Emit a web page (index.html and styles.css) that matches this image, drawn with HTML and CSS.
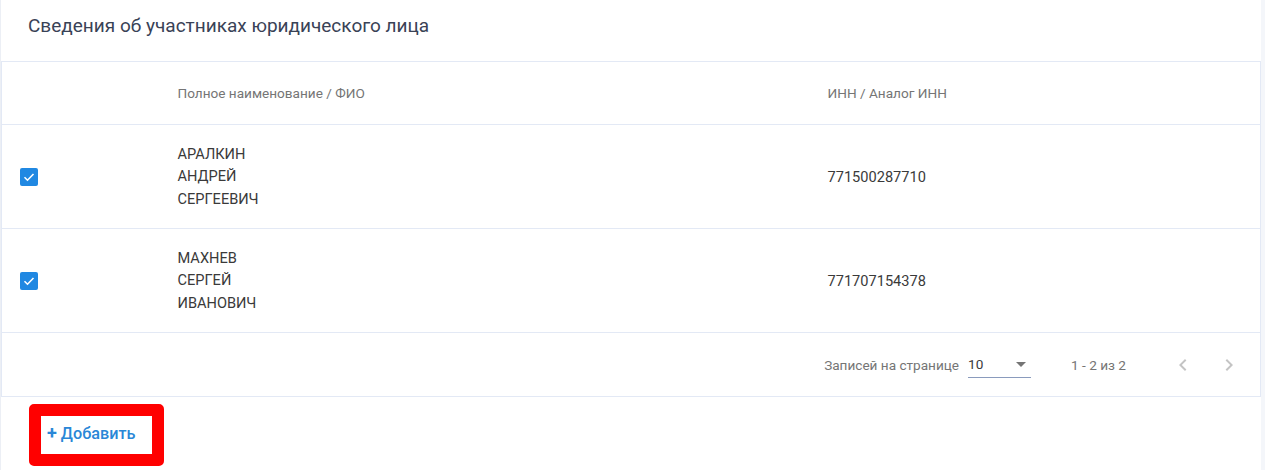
FILE: index.html
```html
<!DOCTYPE html>
<html lang="ru">
<head>
  <meta charset="UTF-8">
  <title>Сведения об участниках</title>
  <link rel="stylesheet" href="styles.css">
</head>
<body>
  <div class="card">
    <h2 class="card-title">Сведения об участниках юридического лица</h2>

    <table class="members">
      <thead>
        <tr>
          <th class="col-check"></th>
          <th class="col-name">Полное наименование / ФИО</th>
          <th class="col-inn">ИНН / Аналог ИНН</th>
        </tr>
      </thead>
      <tbody>
        <tr>
          <td class="col-check"><span class="checkbox"><svg viewBox="0 0 18 18" width="18" height="18"><path d="M4.5 9.2l3 3 6-6.2" fill="none" stroke="#fff" stroke-width="1.6"/></svg></span></td>
          <td class="col-name">АРАЛКИН<br>АНДРЕЙ<br>СЕРГЕЕВИЧ</td>
          <td class="col-inn">771500287710</td>
        </tr>
        <tr>
          <td class="col-check"><span class="checkbox"><svg viewBox="0 0 18 18" width="18" height="18"><path d="M4.5 9.2l3 3 6-6.2" fill="none" stroke="#fff" stroke-width="1.6"/></svg></span></td>
          <td class="col-name">МАХНЕВ<br>СЕРГЕЙ<br>ИВАНОВИЧ</td>
          <td class="col-inn">771707154378</td>
        </tr>
      </tbody>
      <tfoot>
        <tr>
          <td colspan="3">
            <div class="pager">
              <span class="pager-label">Записей на странице</span>
              <div class="pager-select">
                <span>10</span>
                <svg width="10" height="5" viewBox="0 0 10 5"><path d="M0 0h10L5 5z" fill="#757575"/></svg>
              </div>
              <span class="pager-range">1 - 2 из 2</span>
              <div class="pager-nav">
                <svg width="24" height="24" viewBox="0 0 24 24"><path d="M15.4 7.4L14 6l-6 6 6 6 1.4-1.4L10.8 12z" fill="#c4c4c4"/></svg>
                <svg width="24" height="24" viewBox="0 0 24 24"><path d="M10 6L8.6 7.4 13.2 12l-4.6 4.6L10 18l6-6z" fill="#c4c4c4"/></svg>
              </div>
            </div>
          </td>
        </tr>
      </tfoot>
    </table>

    <div class="actions">
      <button class="add-btn"><span class="plus">+</span> Добавить</button>
    </div>
  </div>
</body>
</html>
```

FILE: styles.css
```css
body {
  margin: 0;
  background-color: #f4f6fa;
  font-family: Roboto, "Noto Sans", sans-serif;
  color: #3a3a3a;
}

.card {
  width: 1261px;
  height: 470px;
  background-color: white;
  border-left: 1px solid #eceff5;
  box-sizing: border-box;
}

.card-title {
  margin: 0;
  padding: 14px 0 0 27px;
  height: 61px;
  box-sizing: border-box;
  font-size: 19px;
  font-weight: 400;
  color: #394256;
}

.members {
  width: 1260px;
  border-collapse: collapse;
  border: 1px solid #e3e9f5;
  font-size: 14.6px;
}

.members th {
  height: 62px;
  padding: 0;
  font-size: 13.6px;
  font-weight: 400;
  color: #757575;
  text-align: left;
}

.members td {
  padding: 0;
  border-top: 1px solid #e3e9f5;
}

.members tbody td {
  height: 103px;
}

.col-check {
  width: 176px;
  padding-left: 18px !important;
  box-sizing: border-box;
}

.col-name {
  width: 650px;
  line-height: 22.5px;
}

.checkbox {
  display: block;
  width: 18px;
  height: 18px;
  border-radius: 2px;
  background-color: #2088e2;
}

.checkbox svg {
  display: block;
}

.pager {
  display: flex;
  align-items: center;
  justify-content: flex-end;
  height: 63px;
  padding-right: 19px;
  font-size: 13.6px;
  color: #757575;
}

.pager-label {
  margin-right: 9px;
}

.pager-select {
  display: flex;
  align-items: center;
  justify-content: space-between;
  width: 63px;
  height: 26px;
  padding-right: 5px;
  box-sizing: border-box;
  border-bottom: 1px solid #8a9bbd;
  color: #3a3a3a;
  margin-right: 40px;
}

.pager-range {
  margin-right: 45px;
}

.pager-nav {
  display: flex;
  gap: 22px;
}

.pager-nav svg {
  display: block;
}

.actions {
  padding: 7px 0 0 28px;
}

.add-btn {
  width: 135px;
  height: 62px;
  padding: 0 0 6px 6px;
  text-align: left;
  background-color: white;
  border: 12px solid #ff0000;
  border-radius: 5px;
  font-family: Roboto, "Noto Sans", sans-serif;
  font-size: 16.2px;
  font-weight: 500;
  color: #2a87d7;
  white-space: nowrap;
}

.plus {
  font-weight: 700;
  font-size: 18px;
}
```
